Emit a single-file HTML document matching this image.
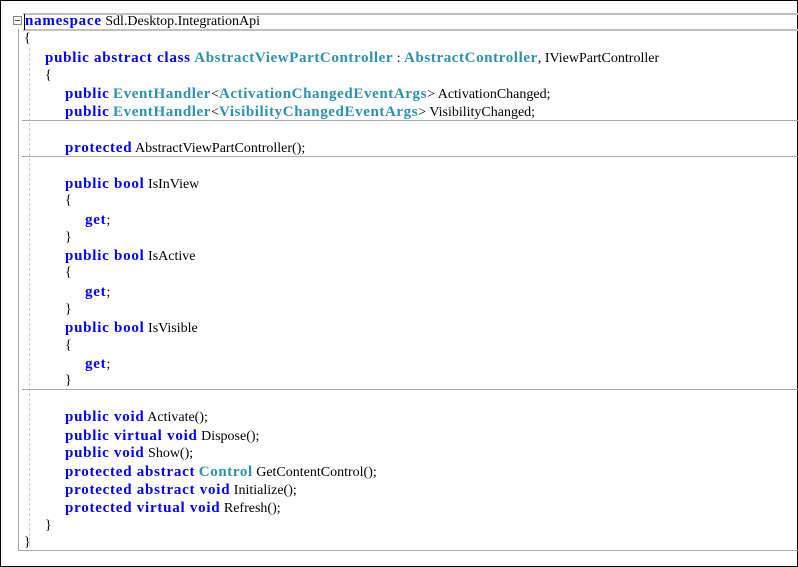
<!DOCTYPE html>
<html><head><meta charset="utf-8"><style>
html,body{margin:0;padding:0;background:#fff}
body{width:798px;height:567px;position:relative;overflow:hidden;font-family:"Liberation Serif","Noto Serif CJK SC",serif;font-size:14px;color:#000}
.frame{position:absolute;left:0;top:0;width:796px;height:565px;border:1px solid #000}
.l{position:absolute;white-space:pre;line-height:18px;height:18px}
.k{color:#0000ff;font-weight:bold;font-size:15px;letter-spacing:0.75px}
.t{color:#2b91af;font-weight:bold;font-size:15px;letter-spacing:0.6px}
.h{position:absolute;height:2px;background:#c0c0c0}
</style></head><body>
<div class="frame"></div>
<div class="h" style="left:23px;top:13px;width:775px"></div>
<div class="h" style="left:23px;top:29px;width:775px"></div>
<div style="position:absolute;left:24px;top:14px;width:1px;height:16px;background:#000"></div>
<div style="position:absolute;left:18px;top:29px;width:1px;height:522px;background:#aaa"></div>
<div style="position:absolute;left:18px;top:550px;width:780px;height:1px;background:#aaa"></div>
<div style="position:absolute;left:29px;top:48px;width:0;height:498px;border-left:1px dashed #ccc"></div>
<div style="position:absolute;left:13px;top:16px;width:7px;height:7px;border:1px solid #888;background:#fff"></div>
<div style="position:absolute;left:15px;top:20px;width:5px;height:1px;background:#444"></div>
<div class="h" style="left:22px;top:120px;width:776px;height:1px;background:#aaa"></div>
<div class="h" style="left:22px;top:156px;width:776px;height:1px;background:#aaa"></div>
<div class="h" style="left:22px;top:389px;width:776px;height:1px;background:#aaa"></div>

<div class="l" style="left:25px;top:12px"><span class="k">namespace</span> Sdl.Desktop.IntegrationApi</div>
<div class="l" style="left:24px;top:30px">{</div>
<div class="l" style="left:45px;top:49px"><span class="k">public abstract class</span> <span class="t">AbstractViewPartController</span> : <span class="t">AbstractController</span>, IViewPartController</div>
<div class="l" style="left:45px;top:67px">{</div>
<div class="l" style="left:65px;top:85px"><span class="k">public</span> <span class="t">EventHandler</span>&lt;<span class="t">ActivationChangedEventArgs</span>&gt; ActivationChanged;</div>
<div class="l" style="left:65px;top:103px"><span class="k">public</span> <span class="t">EventHandler</span>&lt;<span class="t">VisibilityChangedEventArgs</span>&gt; VisibilityChanged;</div>
<div class="l" style="left:65px;top:139px"><span class="k">protected</span> AbstractViewPartController();</div>
<div class="l" style="left:65px;top:175px"><span class="k">public bool</span> IsInView</div>
<div class="l" style="left:65px;top:192px">{</div>
<div class="l" style="left:85px;top:211px"><span class="k">get</span>;</div>
<div class="l" style="left:65px;top:229px">}</div>
<div class="l" style="left:65px;top:247px"><span class="k">public bool</span> IsActive</div>
<div class="l" style="left:65px;top:264px">{</div>
<div class="l" style="left:85px;top:283px"><span class="k">get</span>;</div>
<div class="l" style="left:65px;top:301px">}</div>
<div class="l" style="left:65px;top:319px"><span class="k">public bool</span> IsVisible</div>
<div class="l" style="left:65px;top:337px">{</div>
<div class="l" style="left:85px;top:355px"><span class="k">get</span>;</div>
<div class="l" style="left:65px;top:372px">}</div>
<div class="l" style="left:65px;top:408px"><span class="k">public void</span> Activate();</div>
<div class="l" style="left:65px;top:427px"><span class="k">public virtual void</span> Dispose();</div>
<div class="l" style="left:65px;top:444px"><span class="k">public void</span> Show();</div>
<div class="l" style="left:65px;top:463px"><span class="k">protected abstract</span> <span class="t">Control</span> GetContentControl();</div>
<div class="l" style="left:65px;top:481px"><span class="k">protected abstract void</span> Initialize();</div>
<div class="l" style="left:65px;top:499px"><span class="k">protected virtual void</span> Refresh();</div>
<div class="l" style="left:45px;top:517px">}</div>
<div class="l" style="left:24px;top:534px">}</div>
</body></html>
